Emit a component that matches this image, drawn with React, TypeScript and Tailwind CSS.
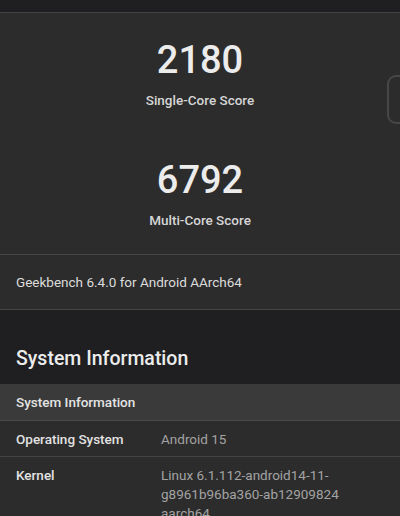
const FONT = "font-['Roboto','Liberation_Sans',sans-serif]"

function Score({ value, label, className = '' }: { value: string; label: string; className?: string }) {
  return (
    <div className={`flex flex-col items-center ${className}`}>
      <div className="text-[38px] leading-[44px] font-medium text-[#ececec]">{value}</div>
      <div className="mt-[8px] text-[13.5px] leading-[20px] font-medium text-[#d6d6d6]">{label}</div>
    </div>
  )
}

const rows: { label: string; value: string[] }[] = [
  { label: 'Operating System', value: ['Android 15'] },
  { label: 'Kernel', value: ['Linux 6.1.112-android14-11-', 'g8961b96ba360-ab12909824', 'aarch64'] },
]

export default function App() {
  return (
    <div className={`relative w-[400px] h-[516px] overflow-hidden bg-[#1f1f21] ${FONT}`}>
      <div className="h-[12px]" />

      {/* Score card */}
      <div className="bg-[#2c2c2c] border-t border-[#414141]">
        <div className="pt-[25px] pb-[24px]">
          <Score value="2180" label="Single-Core Score" />
          <Score value="6792" label="Multi-Core Score" className="mt-[48px]" />
        </div>
        <div className="h-[56px] border-t border-b border-[#464646] flex items-center px-4 text-[13.5px] text-[#dcdcdc]">
          Geekbench 6.4.0 for Android AArch64
        </div>
      </div>

      {/* Scroll handle */}
      <div className="absolute left-[387px] top-[75px] w-[30px] h-[49px] rounded-[9px] border-2 border-[#474747]" />

      <div className="pt-[35px] pb-[11px] px-4 text-[19.5px] leading-[28px] font-medium text-[#ececec]">
        System Information
      </div>

      <div className="bg-[#2c2c2c]">
        <div className="h-[37px] bg-[#3a3a3a] border-b border-[#4a4a4a] flex items-center px-4 text-[13.5px] font-medium text-[#e4e4e4]">
          System Information
        </div>
        {rows.map(r => (
          <div key={r.label} className="grid grid-cols-[145px_1fr] px-4 pt-[9px] pb-[7px] border-b border-[#444] text-[13.5px] leading-[19px]">
            <div className="font-medium text-[#e2e2e2]">{r.label}</div>
            <div className="text-[#a3a3a3]">
              {r.value.map(v => (
                <div key={v}>{v}</div>
              ))}
            </div>
          </div>
        ))}
      </div>
    </div>
  )
}
